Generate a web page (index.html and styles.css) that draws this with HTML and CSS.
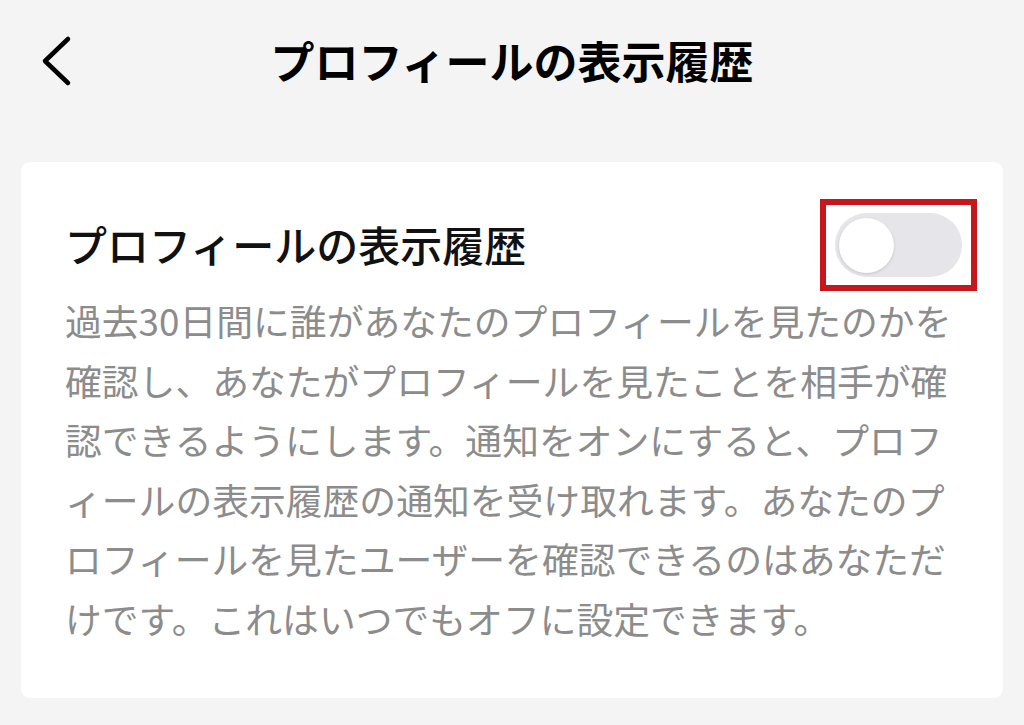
FILE: index.html
```html
<!DOCTYPE html>
<html lang="ja">
    <head>
        <meta charset="utf-8">
        <title>プロフィールの表示履歴</title>
        <link rel="stylesheet" href="styles.css">
    </head>
    <body>

    <header class="topbar">
        <a class="back" href="#">
            <svg width="36" height="52" viewBox="0 0 36 52">
                <polyline points="28,4 5,26 28,48" fill="none" stroke="#000" stroke-width="4.5" stroke-linecap="round" stroke-linejoin="round"/>
            </svg>
        </a>
        <h1>プロフィールの表示履歴</h1>
        <div></div>
    </header>

    <div class="card">
        <div class="card-head">
            <h2>プロフィールの表示履歴</h2>
            <div class="highlight">
                <div class="switch"><span class="knob"></span></div>
            </div>
        </div>
        <p class="desc">過去30日間に誰があなたのプロフィールを見たのかを確認し、あなたがプロフィールを見たことを相手が確認できるようにします。通知をオンにすると、プロフィールの表示履歴の通知を受け取れます。あなたのプロフィールを見たユーザーを確認できるのはあなただけです。これはいつでもオフに設定できます。</p>
    </div>

</body>
</html>
```

FILE: styles.css
```css
body, html {
    margin: 0;
    padding: 0;
    background: #f4f4f4;
    font-family: "Noto Sans CJK JP", "Noto Sans", sans-serif;
}
.topbar {
    display: grid;
    grid-template-columns: 1fr auto 1fr;
    align-items: center;
    height: 124px;
}
.back {
    display: flex;
    padding-left: 40px;
    padding-bottom: 2px;
}
h1 {
    margin: 0 0 4px 0;
    font-size: 44px;
    font-weight: bold;
    color: #000;
    line-height: 1;
}
.card {
    margin: 38px 21px 0 21px;
    background: #fff;
    border-radius: 9px;
    padding: 34px 41px 50px 44px;
}
.card-head {
    display: flex;
    align-items: center;
    justify-content: space-between;
}
h2 {
    margin: 0;
    font-size: 42px;
    font-weight: 500;
    color: #111;
    line-height: 60px;
}
.highlight {
    border: 6px solid #c8161d;
    padding: 8px 9px 8px 9px;
    margin-right: -15px;
    margin-top: 3px;
}
.switch {
    width: 127px;
    height: 64px;
    border-radius: 32px;
    background: #e5e5ea;
    display: flex;
    align-items: center;
    padding-left: 4px;
    box-sizing: border-box;
}
.knob {
    width: 55px;
    height: 55px;
    border-radius: 50%;
    background: #fff;
    box-shadow: 0 1px 3px rgba(0, 0, 0, .15);
}
.desc {
    margin: 0;
    font-size: 36.8px;
    line-height: 59.5px;
    color: #8c8c8c;
    line-break: anywhere;
}
```
